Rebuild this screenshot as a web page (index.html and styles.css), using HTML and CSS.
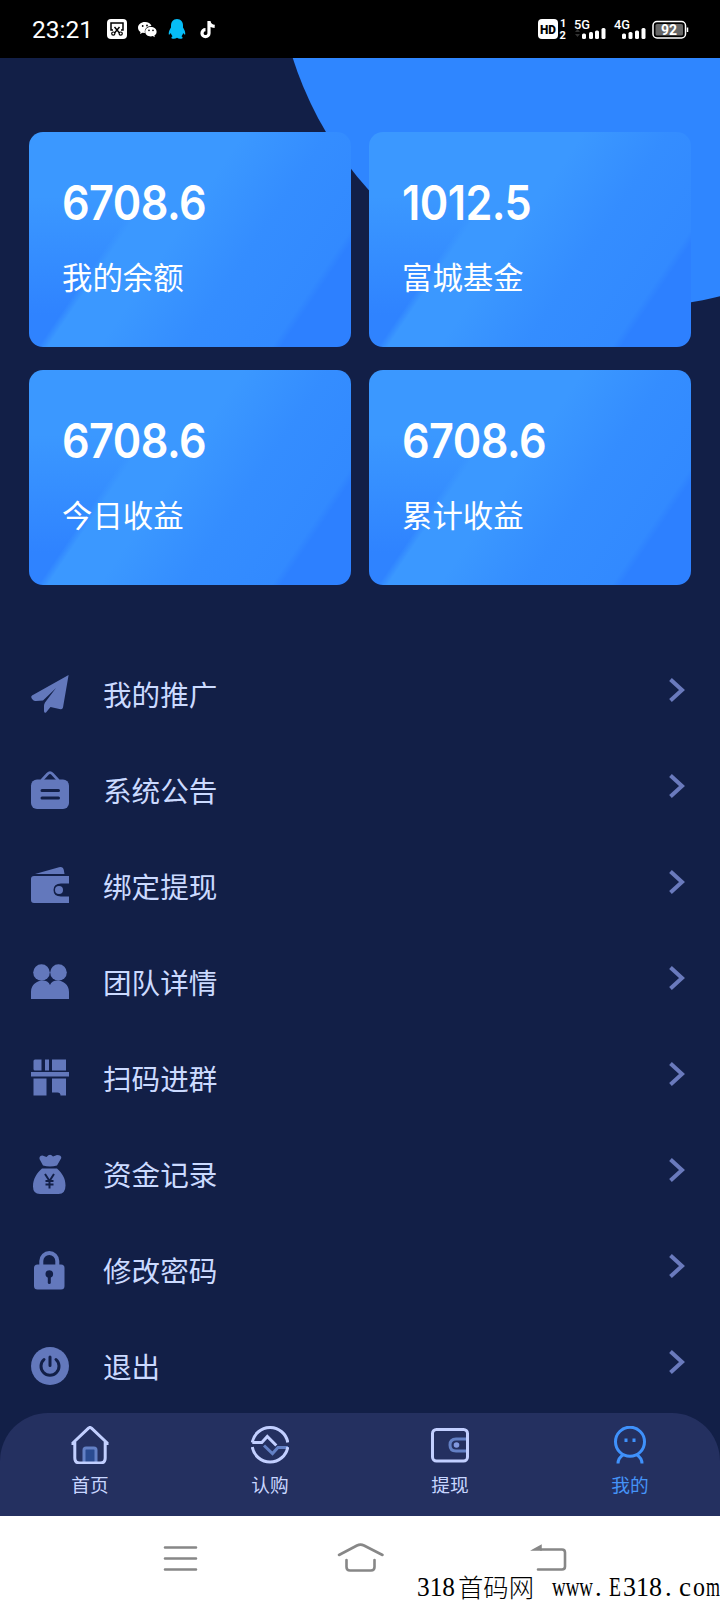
FILE: index.html
```html
<!DOCTYPE html>
<html lang="zh-CN">
<head>
<meta charset="utf-8">
<title>我的</title>
<link rel="stylesheet" href="styles.css">
</head>
<body>
<header class="status">
  <div class="status-left">
    <span class="clock">23:21</span>
    <svg class="s-shot" width="20" height="20" viewBox="0 0 20 20"><rect width="20" height="20" rx="4" fill="#fff"/><path d="M6 11H4V4h12v7h-2" fill="none" stroke="#000" stroke-width="1.5"/><path d="M7.500 8l5 6M12.500 8l-5 6" stroke="#000" stroke-width="1.4"/><circle cx="6.300" cy="14.600" r="1.600" fill="none" stroke="#000" stroke-width="1.200"/><circle cx="13.700" cy="14.600" r="1.600" fill="none" stroke="#000" stroke-width="1.200"/></svg>
    <svg class="s-chat" width="19" height="17" viewBox="0 0 19 17"><path d="M7 1C3 1 0 3.500 0 6.700c0 1.800 1 3.300 2.500 4.300L2 13l2.500-1.300 2.500.4C6 8 9 5 13.500 5 12.700 2.500 10 1 7 1z" fill="#fff"/><path d="M12.800 6C9.500 6 7.200 8 7.200 10.700s2.400 4.700 5.600 4.700l2-.3 2 1.200-.4-1.800c1.400-.9 2.200-2.200 2.200-3.800C18.600 8 16 6 12.800 6z" fill="#fff"/><g fill="#000"><circle cx="4.700" cy="5" r=".9"/><circle cx="9" cy="4.500" r=".9"/><circle cx="11" cy="9.400" r=".8"/><circle cx="15" cy="9.400" r=".8"/></g></svg>
    <svg class="s-qq" width="18" height="20" viewBox="0 0 18 20"><path d="M9 0C5 0 3 3 3 6.500v2C1.500 10.500.5 13 .8 15.500c.8.3 1.500-.5 2-1.500.3 1.300.9 2.400 1.700 3.200-1 .6-1.300 1.300-1 2 1.500.9 4 .8 5.500-.4 1.500 1.200 4 1.300 5.500.4.300-.7 0-1.400-1-2 .8-.8 1.400-1.900 1.700-3.200.5 1 1.200 1.800 2 1.500.3-2.500-.7-5-2.200-7v-2C15 3 13 0 9 0z" fill="#06bdf7"/></svg>
    <svg class="s-note" width="16" height="19" viewBox="0 0 16 19"><path d="M9 1v12.200a3.500 3.500 0 1 1-3.500-3.500M9 1.500c.5 3 2.500 4.700 5.700 4.900" fill="none" stroke="#fff" stroke-width="3.200"/></svg>
  </div>
  <svg class="status-right" width="152" height="22" viewBox="0 0 152 22">
    <rect x="0" y="1" width="20" height="20" rx="4" fill="#fff"/>
    <text x="10" y="15.500" class="t-hd" textLength="16" lengthAdjust="spacingAndGlyphs">HD</text>
    <text x="22" y="9" class="t-sim">1</text><text x="21.500" y="21" class="t-sim">2</text>
    <text x="36" y="10.500" class="t-net" textLength="16" lengthAdjust="spacingAndGlyphs">5G</text>
    <text x="76" y="10.500" class="t-net" textLength="16" lengthAdjust="spacingAndGlyphs">4G</text>
    <path d="M37 14l2.500-3 2.500 3zM37 16l2.500 3 2.500-3z" fill="#333"/>
    <g fill="#fff"><rect x="44" y="15.500" width="4" height="5.500" rx="1.500"/><rect x="51" y="14" width="4" height="7" rx="1.500"/><rect x="57" y="12.500" width="4" height="8.500" rx="1.500"/><rect x="63.500" y="10" width="4" height="11" rx="1.500"/><rect x="84" y="15.500" width="4" height="5.500" rx="1.500"/><rect x="90.500" y="14" width="4" height="7" rx="1.500"/><rect x="97" y="12.500" width="4" height="8.500" rx="1.500"/><rect x="103.500" y="10" width="4" height="11" rx="1.500"/></g>
    <rect x="115" y="3.500" width="32.500" height="16.500" rx="4" fill="none" stroke="#fff" stroke-width="1.500"/><rect x="117.500" y="6" width="27.500" height="11.500" rx="1.500" fill="#666"/><path d="M149.500 9.500v4.500" stroke="#fff" stroke-width="1.500"/>
    <text x="131" y="17" class="t-bat">92</text>
  </svg>
</header>

<main class="screen">
  <div class="disc"></div>
  <section class="cards">
    <article class="card"><strong class="amount">6708.6</strong><span class="label">我的余额</span></article>
    <article class="card"><strong class="amount">1012.5</strong><span class="label">富城基金</span></article>
    <article class="card"><strong class="amount">6708.6</strong><span class="label">今日收益</span></article>
    <article class="card"><strong class="amount">6708.6</strong><span class="label">累计收益</span></article>
  </section>

  <ul class="menu">
    <li class="row"><svg class="icon" viewBox="0 0 38 38"><path d="M37.600 0L1 20.500Q-.5 21.500.6 23.200L2 25q1 1.200 3 1l7-.5L25 13 14 27.500Q13 29 13 31v5q0 2.500 2 1.500l4.500-5.500 10 2.200q2 .4 2.500-1.700z"/></svg><span>我的推广</span><svg class="chev" viewBox="0 0 16 24"><path d="M1.500 1.500L13 12 1.500 22.500"/></svg></li>
    <li class="row"><svg class="icon" viewBox="0 0 38 38"><path d="M10.500 9.500l6-6.500q2.500-2.500 5 0l6 6.500" class="handle"/><rect x="0" y="8.500" width="38" height="29.500" rx="6"/><path d="M11 19.500h16.500M11 27h16.500" class="cut"/></svg><span>系统公告</span><svg class="chev" viewBox="0 0 16 24"><path d="M1.500 1.500L13 12 1.500 22.500"/></svg></li>
    <li class="row"><svg class="icon" viewBox="0 0 38 38"><path d="M4 7L28 .3q4-1 4.800 2.700L33.500 7zM3 9h35v7.500h-8q-7.500 0-7.500 6.500t7.500 6.500h8V36H3q-3 0-3-3V12q0-3 3-3z"/><circle cx="28" cy="23" r="4"/></svg><span>绑定提现</span><svg class="chev" viewBox="0 0 16 24"><path d="M1.500 1.500L13 12 1.500 22.500"/></svg></li>
    <li class="row"><svg class="icon" viewBox="0 0 38 38"><circle cx="10.500" cy="9.500" r="8.300"/><circle cx="27.500" cy="9.500" r="8.300"/><path d="M0 36v-7c0-12 16-15 19-7 3-8 19-5 19 7v7z"/></svg><span>团队详情</span><svg class="chev" viewBox="0 0 16 24"><path d="M1.500 1.500L13 12 1.500 22.500"/></svg></li>
    <li class="row"><svg class="icon" viewBox="0 0 38 38"><path d="M4 .5h6.500v11h-6.500q-1.500 0-1.500-1.500V2q0-1.500 1.500-1.500zM14 .5h4v11h-4zM21 .5h14v11H21zM0 13h38v4.500H0zM2.500 19.500h13V36.500h-13zM21 19.500h14V36.500h-5.500q0-3-3-3H21z"/></svg><span>扫码进群</span><svg class="chev" viewBox="0 0 16 24"><path d="M1.500 1.500L13 12 1.500 22.500"/></svg></li>
    <li class="row"><svg class="icon" viewBox="0 0 38 38"><path d="M12 10.500L8.500 4Q8 .5 11.500.5l4 1.500Q19-2 22 1.500l4-1.500q4.500 0 4.300 3L26 10.500q-7 2-14 0zM11 13.500h15C31 18 34.500 23 34.500 30.500q0 8.500-7 8.500H9q-7 0-7-7.500c0-8 4-13.500 9-18z"/><path d="M14 19l4.500 7 4.500-7M18.500 26v7.500M14.500 26h8M14.500 29.500h8" class="cut thin"/></svg><span>资金记录</span><svg class="chev" viewBox="0 0 16 24"><path d="M1.500 1.500L13 12 1.500 22.500"/></svg></li>
    <li class="row"><svg class="icon" viewBox="0 0 38 38"><path d="M10.300 16V10a8 8 0 0 1 16 0v6" class="line"/><rect x="3" y="13.500" width="30.500" height="25" rx="3.500"/><circle cx="18.300" cy="23" r="3.800" class="hole"/><path d="M18.300 24v7.500" class="cut"/></svg><span>修改密码</span><svg class="chev" viewBox="0 0 16 24"><path d="M1.500 1.500L13 12 1.500 22.500"/></svg></li>
    <li class="row"><svg class="icon" viewBox="0 0 38 38"><circle cx="19" cy="19" r="19"/><path d="M13 12.500a9 9 0 1 0 12 0M19 10v8.500" class="cut"/></svg><span>退出</span><svg class="chev" viewBox="0 0 16 24"><path d="M1.500 1.500L13 12 1.500 22.500"/></svg></li>
  </ul>
</main>

<nav class="tabs">
  <a class="tab"><svg class="tab-icon" viewBox="0 0 38 38"><path d="M13 36V24q0-2 2-2h8q2 0 2 2v12" fill="#2a4b91" stroke="#6380c5"/><path d="M.5 17.500h3.300V32q0 5 5 5h20.400q5 0 5-5V17.500h3.300M1.300 17.500L17.500 2.200q1.500-1.400 3 0L36.700 17.500"/></svg><span>首页</span></a>
  <a class="tab"><svg class="tab-icon" viewBox="0 0 38 38"><path d="M13 19.500l8.500 8 5.500-6h10" stroke="#6380c5"/><path d="M1.300 16.500a18 18 0 0 1 35.500 0M1.300 21a18 18 0 0 0 35.500 0M1.300 16.500h9.500l5.500-6 9 9"/></svg><span>认购</span></a>
  <a class="tab"><svg class="tab-icon" viewBox="0 0 38 38"><path d="M36 13H25q-6 0-6 6t6 6h11" stroke="#6380c5"/><circle cx="25.500" cy="19" r="2.800" fill="#8299df" stroke="none"/><rect x="1.500" y="3.500" width="35" height="31.500" rx="4"/></svg><span>提现</span></a>
  <a class="tab tab-active"><svg class="tab-icon" viewBox="0 0 38 38"><circle cx="19" cy="15.700" r="14.500"/><path d="M7 37.500q0-5.500 5.500-9M31 37.500q0-5.500-5.500-9"/><path d="M15 12.500v3.500M23 12.500v3.500"/></svg><span>我的</span></a>
</nav>

<footer class="sysbar">
  <svg class="sysicons" width="720" height="84" viewBox="0 0 720 84">
    <path d="M165 31.500h31M165 42.500h31M165 53.500h31"/>
    <path d="M339 39L357 29.500q3.500-1.800 7 0L382.500 39M346.500 44v7q0 3.500 3.500 3.500h21q3.500 0 3.500-3.500v-7"/>
    <path d="M541 33.500H562q3 0 3 3V50.500q0 3-3 3h-24"/>
    <path d="M533 34l8-4.500v4.500z" fill="#878787" stroke-width="1.500"/>
  </svg>
  <svg class="mark" width="304" height="31" viewBox="0 0 304 31">
    <text x="1" y="27" textLength="38" lengthAdjust="spacingAndGlyphs">318</text>
    <text x="42" y="28" class="mark-cjk" textLength="76" lengthAdjust="spacingAndGlyphs">首码网</text>
    <text x="136" y="27" textLength="41" lengthAdjust="spacingAndGlyphs">www</text>
    <text x="179" y="27">.</text>
    <text x="193" y="27" textLength="12" lengthAdjust="spacingAndGlyphs">E</text>
    <text x="207" y="27" textLength="39" lengthAdjust="spacingAndGlyphs">318</text>
    <text x="249" y="27">.</text>
    <text x="263" y="27" textLength="12" lengthAdjust="spacingAndGlyphs">c</text>
    <text x="277" y="27" textLength="12" lengthAdjust="spacingAndGlyphs">o</text>
    <text x="290" y="27" textLength="14" lengthAdjust="spacingAndGlyphs">m</text>
  </svg>
</footer>
</body>
</html>
```
FILE: styles.css
```css
* { box-sizing: border-box; }
body {
  margin: 0;
  width: 720px;
  height: 1600px;
  overflow: hidden;
  display: flex;
  flex-direction: column;
  background: #121f47;
  font-family: "Noto Sans CJK SC", sans-serif;
}

.status {
  height: 58px;
  flex: none;
  padding: 0 32px;
  background: #000;
  display: flex;
  justify-content: space-between;
  align-items: center;
}
.status-left { display: flex; align-items: center; }
.clock {
  width: 75px;
  color: #fff;
  font: 400 24.5px/30px Roboto, sans-serif;
  white-space: nowrap;
  padding-top: 2px;
}
.s-chat { margin-left: 11px; }
.s-qq { margin-left: 11px; }
.s-note { margin-left: 14px; }
.status-right { margin-right: -2px; font-family: Roboto, sans-serif; overflow: visible; }
.t-hd { font-size: 12px; font-weight: 900; text-anchor: middle; }
.t-sim { font-size: 11px; font-weight: 700; fill: #fff; }
.t-net { font-size: 13px; font-weight: 500; fill: #fff; }
.t-bat { font-size: 14px; font-weight: 700; fill: #fff; text-anchor: middle; }

.screen {
  position: relative;
  height: 1355px;
  flex: none;
  padding-top: 74px;
  overflow: hidden;
}
.disc {
  position: absolute;
  left: 276px;
  top: -465px;
  width: 714px;
  height: 714px;
  border-radius: 50%;
  background: #2f86ff;
}
.cards {
  position: relative;
  display: grid;
  grid-template-columns: 322px 322px;
  grid-auto-rows: 215px;
  gap: 23px 18px;
  padding: 0 29px;
}
.card {
  display: flex;
  flex-direction: column;
  padding: 42px 33px 0;
  border-radius: 14px;
  color: #fff;
  background:
    linear-gradient(124deg, transparent 46%, rgba(44, 128, 255, .45) 64%, rgba(44, 128, 255, .6) 83%, #2d80ff 85%),
    linear-gradient(304deg, #3b98ff 0 65%, transparent 67%),
    linear-gradient(180deg, #3b98ff 30%, #2f83ff 85%);
}
.amount {
  font: 600 48px/58px Inter, sans-serif;
  letter-spacing: -.6px;
  transform: scaleX(.9);
  transform-origin: 0 50%;
}
.label { margin-top: 22px; font-size: 30.4px; line-height: 44px; }

.menu { margin: 60px 0 0; padding: 0; list-style: none; }
.row {
  height: 96px;
  padding: 0 35px 0 31px;
  display: flex;
  align-items: center;
  color: #cbdaff;
  font-size: 28.6px;
}
.row span { flex: 1; margin-left: 34px; padding-top: 2px; line-height: 40px; }
.icon { width: 38px; height: 38px; margin-top: 2px; fill: #6378bc; overflow: visible; }
.line { fill: none; stroke: #6378bc; stroke-width: 4; }
.handle { fill: none; stroke: #6378bc; stroke-width: 2.6; }
.cut { fill: none; stroke: #121f47; stroke-width: 3; stroke-linecap: round; }
.thin { stroke-width: 2; stroke-linecap: butt; }
.hole { fill: #121f47; }
.chev {
  width: 16px;
  height: 24px;
  margin-bottom: 6px;
  fill: none;
  stroke: #6a7abd;
  stroke-width: 4;
}

.tabs {
  height: 103px;
  flex: none;
  display: grid;
  grid-template-columns: repeat(4, 180px);
  border-radius: 48px 48px 0 0;
  background: #243060;
}
.tab {
  display: flex;
  flex-direction: column;
  align-items: center;
  padding-top: 13px;
  color: #c8d6ff;
  font-size: 18.7px;
  line-height: 28px;
}
.tab span { margin-top: 6px; }
.tab-icon {
  width: 38px;
  height: 38px;
  fill: none;
  stroke: #c2cfff;
  stroke-width: 3;
}
.tab-active { color: #4593f7; }
.tab-active .tab-icon { stroke: #3f91fb; }

.sysbar { position: relative; height: 84px; flex: none; background: #fff; }
.sysicons { display: block; fill: none; stroke: #878787; stroke-width: 2.6; stroke-linecap: round; }
.mark { position: absolute; right: 0; bottom: 0; overflow: visible; font: 26.5px "Liberation Serif", serif; fill: #000; }
.mark-cjk { font: 300 25px "Noto Sans CJK SC", sans-serif; }
```
